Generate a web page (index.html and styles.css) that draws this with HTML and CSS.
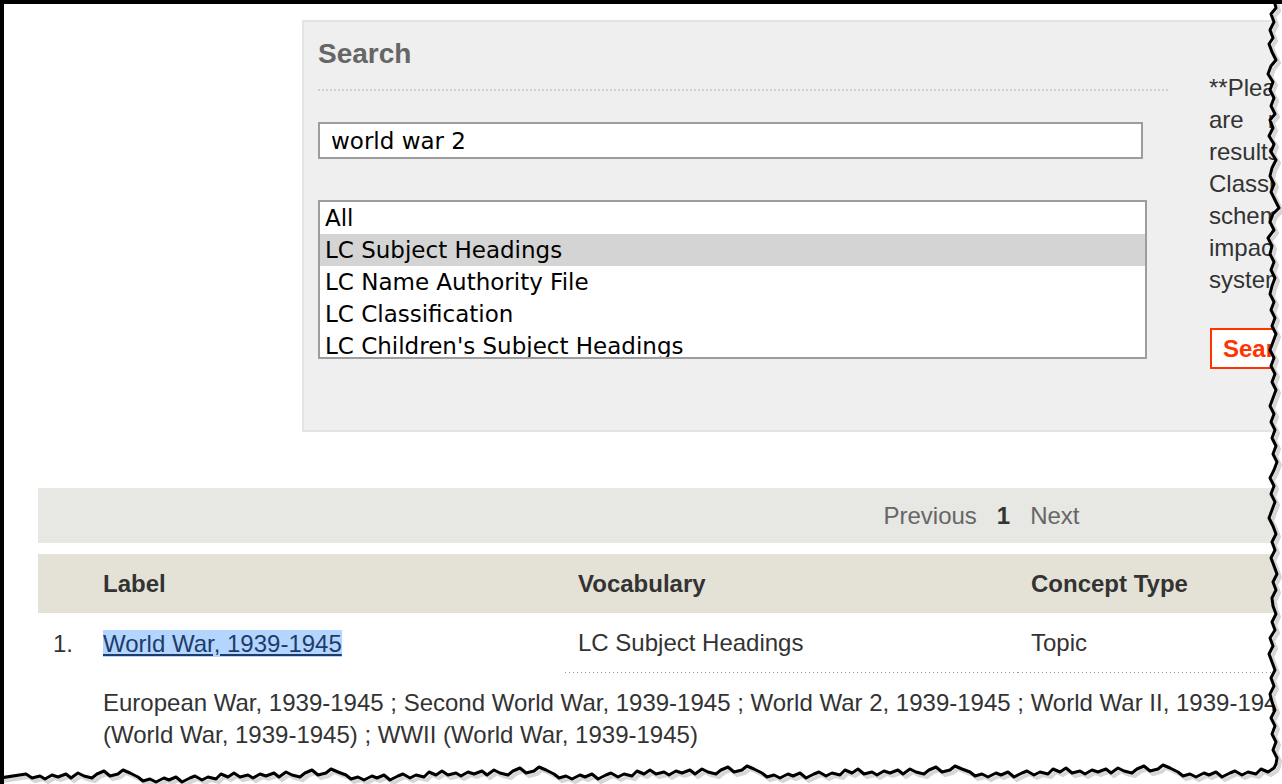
FILE: index.html
```html
<!DOCTYPE html>
<html lang="en">
<head>
    <meta charset="UTF-8">
    <meta name="viewport" content="width=device-width, initial-scale=1.0">
    <title>Search</title>
    <link rel="stylesheet" href="styles.css">
</head>
<body>
    <div class="sheet">
        <div class="page">
            <section class="search-panel">
                <div class="search-form">
                    <h2>Search</h2>
                    <input class="query" type="text" value="world war 2">
                    <div class="vocab-list">
                        <div class="vocab">All</div>
                        <div class="vocab selected">LC Subject Headings</div>
                        <div class="vocab">LC Name Authority File</div>
                        <div class="vocab">LC Classification</div>
                        <div class="vocab">LC Children's Subject Headings</div>
                    </div>
                </div>
                <aside class="search-note">
                    <p>**Please note that searches are not inclusive of all results from the LC Classification, whose scheme size would also impact overall search system performance.</p>
                    <button class="search-btn">Search</button>
                </aside>
            </section>

            <div class="pager">
                <a href="#">Previous</a>
                <strong>1</strong>
                <a href="#">Next</a>
            </div>

            <table class="results">
                <colgroup>
                    <col class="col-num">
                    <col class="col-label">
                    <col class="col-vocab">
                    <col>
                </colgroup>
                <thead>
                    <tr>
                        <th></th>
                        <th>Label</th>
                        <th class="vocab-cell">Vocabulary</th>
                        <th class="vocab-cell">Concept Type</th>
                    </tr>
                </thead>
                <tbody>
                    <tr>
                        <td>1.</td>
                        <td><a class="term" href="#">World War, 1939-1945</a></td>
                        <td class="vocab-cell dotted">LC Subject Headings</td>
                        <td class="vocab-cell dotted">Topic</td>
                    </tr>
                    <tr>
                        <td></td>
                        <td class="alt-labels" colspan="3">
                            <p>European War, 1939-1945 ; Second World War, 1939-1945 ; World War 2, 1939-1945 ; World War II, 1939-1945 ; World War Two, 1939-1945 ; WW2 (World War, 1939-1945) ; WWII (World War, 1939-1945)</p>
                        </td>
                    </tr>
                </tbody>
            </table>
        </div>

        <!-- ragged paper edge along the right and bottom -->
        <svg class="torn-edge" width="1282" height="784" viewBox="0 0 1282 784">
            <defs>
                <path id="edge" d="M1290 -10 L1274 -10 L1274 0 L1276 8 L1271 14 L1274 22 L1270 30 L1273 38 L1269 44 L1272 52 L1276 60 L1271 66 L1268 74 L1273 82 L1270 90 L1274 98 L1271 106 L1275 114 L1270 120 L1273 128 L1269 136 L1274 144 L1271 152 L1276 160 L1272 168 L1270 176 L1274 184 L1271 192 L1275 200 L1279 208 L1273 214 L1270 222 L1274 230 L1268 238 L1272 246 L1270 254 L1274 262 L1271 270 L1275 278 L1272 286 L1270 294 L1274 302 L1271 310 L1275 318 L1272 326 L1276 334 L1273 342 L1270 350 L1274 358 L1271 366 L1275 374 L1272 382 L1276 390 L1273 398 L1270 406 L1274 414 L1271 422 L1275 430 L1272 438 L1276 446 L1273 454 L1277 462 L1274 470 L1270 478 L1274 486 L1271 494 L1275 502 L1272 510 L1269 518 L1273 526 L1276 534 L1272 542 L1275 550 L1271 558 L1274 566 L1277 574 L1273 582 L1276 590 L1272 598 L1273 606 L1276 614 L1272 622 L1275 630 L1270 638 L1273 646 L1269 654 L1272 662 L1275 670 L1271 678 L1274 686 L1270 694 L1272 702 L1275 710 L1271 718 L1275 726 L1272 734 L1276 742 L1273 750 L1277 758 L1276 764 L1274 768
                    l-6 4 -7 -3 -5 5 -8 -2 -6 3 -7 -4 -5 2 -8 4 -6 -5 -7 3 -5 -2 -8 4 -6 -3 -7 2 -5 -4 -8 -4
                    l-7 -3 -5 4 -8 2 -6 -5 -7 3 -5 4 -8 -2 -6 -3 -7 5 -5 -4 -8 3 -6 -2 -7 4 -5 -3 -8 2 -6 -5
                    l-6 4 -7 -3 -5 5 -8 -2 -6 3 -7 -4 -5 2 -8 4 -6 -5 -7 3 -5 -2 -8 4 -6 -3 -7 2 -5 -4 -8 -3
                    l-7 -3 -5 4 -8 2 -6 -5 -7 3 -5 4 -8 -2 -6 -3 -7 5 -5 -4 -8 3 -6 -2 -7 4 -5 -3 -8 2 -6 -5
                    l-6 4 -7 -3 -5 5 -8 -2 -6 3 -7 -4 -5 2 -8 4 -6 -5 -7 3 -5 -2 -8 4 -6 -3 -7 2 -5 -4 -8 -4
                    l-7 -3 -5 4 -8 2 -6 -5 -7 3 -5 4 -8 -2 -6 -3 -7 5 -5 -4 -8 3 -6 -2 -7 4 -5 -3 -8 2 -6 -4
                    l-6 4 -7 -3 -5 5 -8 -2 -6 3 -7 -4 -5 2 -8 4 -6 -5 -7 3 -5 -2 -8 4 -6 -3 -7 2 -5 -4 -8 -4
                    l-7 -3 -5 4 -8 2 -6 -5 -7 3 -5 4 -8 -2 -6 -3 -7 5 -5 -4 -8 3 -6 -2 -7 4 -5 -3 -8 2 -6 -4
                    l-6 4 -7 -3 -5 5 -8 -2 -6 3 -7 -4 -5 2 -8 4 -6 -5 -7 3 -5 -2 -8 4 -6 -3 -7 2 -5 -4 -8 -3
                    l-7 -3 -5 4 -8 2 -6 -5 -7 3 -5 4 -8 -2 -6 -3 -7 5 -5 -4 -8 3 -6 -2 -7 4 -5 -3 -8 2 -6 -4
                    l-6 4 -7 -3 -5 5 -8 -2 -6 3 -7 -4 -5 2 -8 4 -6 -5 -7 3 -5 -2 -8 4 -6 -3 -7 2 -5 -4 -8 -4
                    l-7 -3 -5 4 -8 2 -6 -5 -7 3 -5 4 -8 -2 -6 -3 -7 5 -5 -4 -8 3 -6 -2 -7 4 -5 -3 -8 2 -6 -4
                    L0 778 L-10 778 L-10 800 L1290 800 Z"/>
            </defs>
            <use href="#edge" class="edge-paper"/>
            <use href="#edge" class="edge-shadow" transform="translate(3 3)"/>
            <use href="#edge" class="edge-line"/>
        </svg>
    </div>
</body>
</html>
```

FILE: styles.css
```css
* {
    box-sizing: border-box;
}
body {
    margin: 0;
    background: #fff;
    font-family: "Liberation Sans", Arial, sans-serif;
    color: #333;
}
.sheet {
    position: relative;
    width: 1282px;
    height: 784px;
    overflow: hidden;
    border-top: 4px solid #000;
    border-left: 4px solid #000;
}
.page {
    width: 1960px;
    padding: 16px 0 0 34px;
}

/* search box */
.search-panel {
    display: flex;
    align-items: flex-start;
    gap: 41px;
    width: 1260px;
    margin-left: 264px;
    padding: 16px 20px 0 14px;
    background: #efefef;
    border: 2px solid #e3e3e3;
}
.search-form {
    flex: none;
    width: 850px;
    padding-bottom: 71px;
}
.search-form h2 {
    margin: 0;
    padding-bottom: 19px;
    font-size: 28px;
    line-height: 32px;
    color: #666;
    border-bottom: 2px dotted #cfcfcf;
}
.query {
    display: block;
    width: 825px;
    height: 37px;
    margin: 31px 0 0;
    padding: 0 11px;
    border: 2px solid #9d9d9d;
    background: #fff;
    font: 23px "DejaVu Sans", sans-serif;
    color: #000;
    outline: none;
}
.vocab-list {
    width: 829px;
    height: 159px;
    margin-top: 41px;
    border: 2px solid #9d9d9d;
    background: #fff;
    overflow: hidden;
    font: 23px "DejaVu Sans", sans-serif;
    color: #000;
}
.vocab {
    height: 32px;
    line-height: 32px;
    padding-left: 5px;
    white-space: nowrap;
}
.vocab.selected {
    background: #d4d4d4;
}
.search-note {
    flex: none;
    width: 300px;
    padding-top: 34px;
}
.search-note p {
    margin: 0;
    font-size: 24px;
    line-height: 32px;
    text-align: justify;
    color: #333;
}
.search-btn {
    margin: 32px 0 0 1px;
    height: 41px;
    padding: 0 11px;
    border: 2px solid #ff3300;
    background: #fff;
    color: #ff3300;
    font: bold 24px "Liberation Sans", Arial, sans-serif;
}

/* paging */
.pager {
    display: flex;
    justify-content: center;
    align-items: center;
    width: 1887px;
    height: 55px;
    margin-top: 56px;
    background: #e7e7e3;
    font-size: 24px;
}
.pager a {
    padding: 0 10px;
    color: #666;
    text-decoration: none;
}
.pager strong {
    padding: 0 10px;
    color: #333;
}

/* results */
.results {
    width: 1887px;
    margin-top: 11px;
    border-collapse: collapse;
    table-layout: fixed;
    font-size: 24px;
}
.col-num {
    width: 50px;
}
.col-label {
    width: 477px;
}
.col-vocab {
    width: 453px;
}
.results th {
    padding: 16px 15px;
    background: #e4e2d6;
    text-align: left;
    line-height: 27px;
    color: #333;
}
.results td {
    padding: 16px 15px;
    line-height: 27px;
    vertical-align: middle;
}
.results .vocab-cell {
    padding-left: 13px;
}
.results td.dotted {
    padding-bottom: 17px;
    background: linear-gradient(to right, #9a9a9a 1px, transparent 1px) left bottom / 4px 1px repeat-x;
}
.term {
    color: #1d3c6c;
    background: #b4d5fe;
}
.results td.alt-labels {
    padding: 14px 15px 0;
    line-height: 32px;
}
.alt-labels p {
    margin: 0;
    width: 1622px;
}

/* paper edge */
.torn-edge {
    position: absolute;
    left: -4px;
    top: -4px;
    pointer-events: none;
}
.edge-paper {
    fill: #fff;
}
.edge-shadow {
    fill: none;
    stroke: #d6d6d6;
    stroke-width: 4;
}
.edge-line {
    fill: none;
    stroke: #000;
    stroke-width: 3;
    stroke-linejoin: round;
}
```
